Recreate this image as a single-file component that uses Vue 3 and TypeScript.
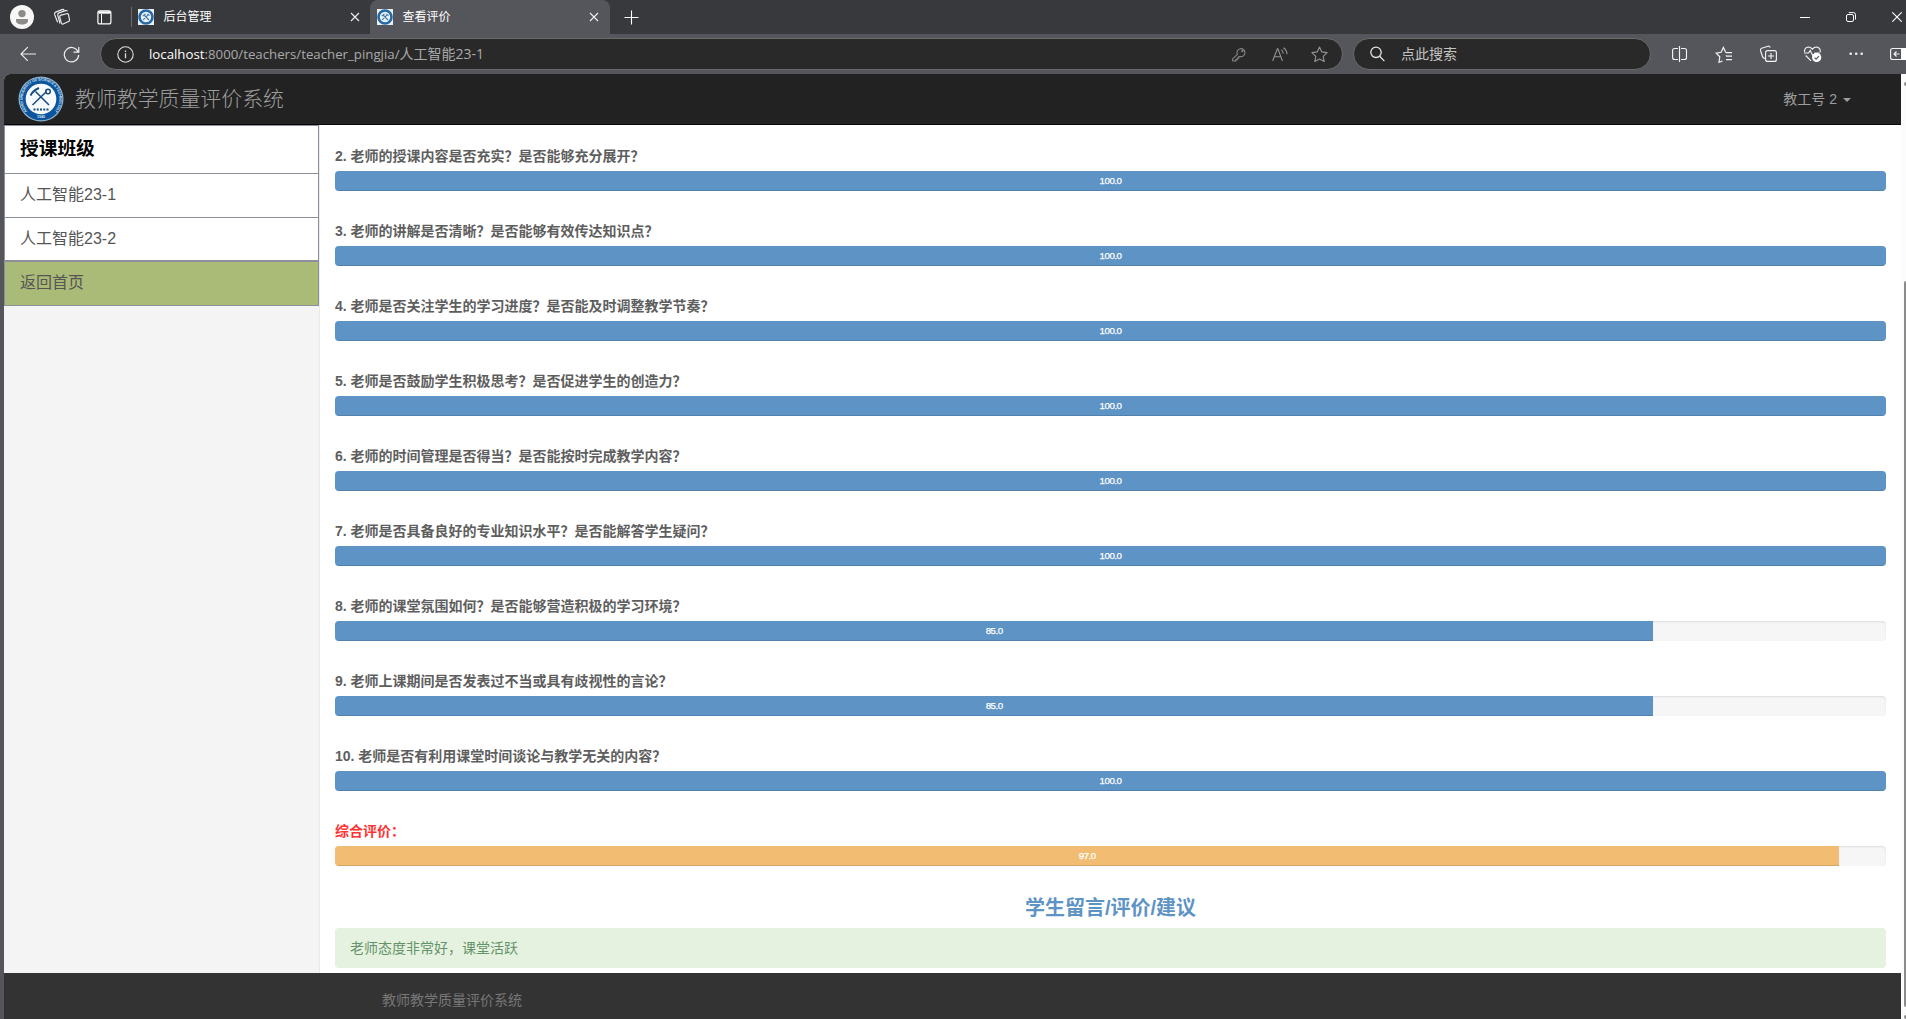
<script setup lang="ts">
interface Rating {
  label: string
  score: number
  total?: boolean
}

const classes: string[] = ['人工智能23-1', '人工智能23-2']

const ratings: Rating[] = [
  { label: '2. 老师的授课内容是否充实？是否能够充分展开？', score: 100 },
  { label: '3. 老师的讲解是否清晰？是否能够有效传达知识点？', score: 100 },
  { label: '4. 老师是否关注学生的学习进度？是否能及时调整教学节奏？', score: 100 },
  { label: '5. 老师是否鼓励学生积极思考？是否促进学生的创造力？', score: 100 },
  { label: '6. 老师的时间管理是否得当？是否能按时完成教学内容？', score: 100 },
  { label: '7. 老师是否具备良好的专业知识水平？是否能解答学生疑问？', score: 100 },
  { label: '8. 老师的课堂氛围如何？是否能够营造积极的学习环境？', score: 85 },
  { label: '9. 老师上课期间是否发表过不当或具有歧视性的言论？', score: 85 },
  { label: '10. 老师是否有利用课堂时间谈论与教学无关的内容？', score: 100 },
  { label: '综合评价：', score: 97, total: true },
]

const tabs = [
  { title: '后台管理', active: false },
  { title: '查看评价', active: true },
]
</script>

<template>
  <div class="window">
    <div class="tabstrip">
      <svg class="avatar" width="24" height="24" viewBox="0 0 24 24">
        <circle cx="12" cy="12" r="12" fill="#f7f7f7" />
        <circle cx="12" cy="8.6" r="3.7" fill="#8d8a88" />
        <path d="M6 14h12v1.4c0 2.600-2.600 4.100-6 4.100s-6-1.500-6-4.100z" fill="#8d8a88" />
      </svg>
      <svg class="workspaces" width="18" height="18" viewBox="0 0 18 18" fill="none" stroke="#eee" stroke-width="1.150">
        <path d="M8.300 5.300 14 3.900q1.400-.3 1.800 1l1 5.100q.3 1.200-.9 1.700l-5.500 2.500q-1.300.5-1.700-.8L7 7.200q-.3-1.500 1.300-1.900z" transform="translate(-.3 1.800)" />
        <path d="M7 15.500 4.800 7.400q-.5-1.800 1.200-2.500L12.500 2.600q1.400-.4 1.900.7M4.600 14.200 1.700 6.700q-.6-1.800 1-2.600L9 1.600q1.400-.5 2.200.5" />
      </svg>
      <svg class="tabmenu" width="15" height="15" viewBox="0 0 15 15" fill="none" stroke="#fff" stroke-width="1.200">
        <rect x=".9" y=".9" width="13" height="13" rx="2" />
        <path d="M1.500 2.500h12" stroke-width="2.400" />
        <path d="M4.500 4v10" stroke-width="1" />
      </svg>
      <span class="divider"></span>
      <div v-for="tab in tabs" :key="tab.title" class="tab" :class="{ active: tab.active }">
        <svg class="favicon" width="16" height="16" viewBox="0 0 16 16">
          <rect width="16" height="16" fill="#e9f1f7" />
          <circle cx="8" cy="8" r="6.500" fill="#e9f1f7" stroke="#2468a5" stroke-width="2.600" />
          <path d="M5.200 10.800 10.500 5.400M6 6l5 5M4.700 7.200 7.500 4.800M9.500 5l2 1.700" stroke="#3d78ad" stroke-width="1.100" fill="none" />
        </svg>
        <span class="tab-title">{{ tab.title }}</span>
        <svg class="close" width="10" height="10" viewBox="0 0 10 10" stroke="#f0f0f0" stroke-width="1.100">
          <path d="M1 1l8 8M9 1 1 9" />
        </svg>
      </div>
      <svg class="newtab" width="15" height="15" viewBox="0 0 15 15" stroke="#fff" stroke-width="1.100">
        <path d="M7.500.5v14M.5 7.500h14" />
      </svg>
      <div class="win-controls">
        <svg width="10" height="10" viewBox="0 0 10 10" stroke="#fff"><path d="M0 5.500h10" /></svg>
        <svg width="10" height="10" viewBox="0 0 10 10" fill="none" stroke="#fff">
          <rect x=".5" y="2.500" width="7" height="7" rx="1.500" />
          <path d="M2.800.6h4.700q2 0 2 2v4.900" />
        </svg>
        <svg width="10" height="10" viewBox="0 0 10 10" stroke="#fff" stroke-width="1.100"><path d="M.3.300l9.400 9.400M9.700.3.300 9.700" /></svg>
      </div>
    </div>

    <div class="toolbar">
      <svg class="back" width="17" height="16" viewBox="0 0 17 16" fill="none" stroke="#eee" stroke-width="1.150">
        <path d="M16 8H1.200M7.800 1.200 1 8l6.800 6.800" />
      </svg>
      <svg class="reload" width="17" height="17" viewBox="0 0 17 17" fill="none" stroke="#eee" stroke-width="1.200">
        <path d="M15.300 6.300A7.200 7.200 0 1 0 15.700 9M15.800 1v5.200h-5.300" />
      </svg>
      <div class="address">
        <svg class="info" width="17" height="17" viewBox="0 0 17 17" fill="none" stroke="#ddd" stroke-width="1.100">
          <circle cx="8.500" cy="8.500" r="7.700" />
          <path d="M8.500 7.300v5M8.500 4.500v1.500" stroke-width="1.300" />
        </svg>
        <span class="url"><b>localhost</b>:8000/teachers/teacher_pingjia/<i>人工智能23-1</i></span>
        <svg class="key" width="14" height="15" viewBox="0 0 14 15" fill="none" stroke="#858585" stroke-width="1.100">
          <path d="M5.400 7.500A4 4 0 1 1 7.900 9.500L6.700 9.700V11.100H5.300V12.600H3.800V14H1.200Q.6 14 .6 13.400V11.900z" />
          <circle cx="10.300" cy="4.200" r=".6" />
        </svg>
        <svg class="read" width="16" height="15" viewBox="0 0 16 15" fill="none" stroke="#929292" stroke-width="1.100">
          <path d="M.6 14 5.400 1.800h.5L10.400 14M2.300 9.700h6.500M9.200 2.600q2 1.500 2 4M11.400.7q3.600 2.300 3.600 6.500" />
        </svg>
        <svg class="star" width="17" height="17" viewBox="0 0 17 17" fill="none" stroke="#929292" stroke-width="1.150" stroke-linejoin="round">
          <path d="M8.500 1l2.300 4.900 5.300.7-3.900 3.700 1 5.300-4.700-2.600-4.700 2.600 1-5.300L.9 6.600l5.300-.7z" />
        </svg>
      </div>
      <div class="search">
        <svg width="15" height="16" viewBox="0 0 15 16" fill="none" stroke="#e6e6e6" stroke-width="1.300">
          <circle cx="6" cy="6.300" r="5.200" />
          <path d="m9.700 10.300 4.700 4.800" />
        </svg>
        <span>点此搜索</span>
      </div>
      <svg class="actions" width="235" height="20" viewBox="0 0 235 20" fill="none" stroke="#f2f2f2" stroke-width="1.150">
        <path d="M7 4.500H3.600q-2 0-2 2v7q0 2 2 2H7M10 4.500h3.500q2 0 2 2v7q0 2-2 2H10M8.500 2v16" />
        <path d="M55 11.800v-.5M51.500 17l-3.500 1.300.8-5.500-3.600-3.700 4.900-.8 2.300-4.800 2.300 4.800 1.200.2M55 8.700h6M55 12.200h6M55 15.700h6" stroke-width="1.200" />
        <path d="M94.200 14.800Q91.800 14 91.300 12L89.500 6.500Q89 4.800 90.600 4.200L97 2.200q1.500-.3 2.300 1.200" />
        <rect x="94.600" y="6.600" width="10.800" height="10.800" rx="2" />
        <path d="M100 9v6M97 12h6" />
        <path d="M140 16.800 134.700 11.500M133.500 8q-.4-4.500 4-5 2.100 0 3.900 2.200Q143 3 145.500 3q4.200.5 3.800 5.300M133 9h4.500l1.700-2.500 3 6 1.700-3.500h5" />
        <circle cx="145.700" cy="13.500" r="4.600" fill="#fff" stroke="none" />
        <path d="m143.600 13.600 1.500 1.500 2.800-3" stroke="#55565b" />
        <g fill="#f2f2f2" stroke="none">
          <circle cx="179.700" cy="9.700" r="1.300" /><circle cx="185.200" cy="9.700" r="1.300" /><circle cx="190.700" cy="9.700" r="1.300" />
        </g>
        <path d="M235 4.500h-13.400q-2 0-2 2v7q0 2 2 2H235M228.500 10h-5.500M225.500 7.500 223 10l2.500 2.500" />
        <path d="M230 4h6v12h-6z" fill="#fff" stroke="none" />
      </svg>
    </div>

    <div class="viewport">
      <div class="page">
        <header class="navbar">
          <svg class="logo" width="46" height="46" viewBox="0 0 46 46">
            <defs>
              <path id="seal-top" d="M9.200 35.200A18.400 18.400 0 1 1 36.800 35.200" />
            </defs>
            <circle cx="23" cy="23" r="22.500" fill="#90b2cf" />
            <circle cx="23" cy="23" r="21.300" fill="#0c559e" />
            <circle cx="23" cy="23" r="15.300" fill="#f7fafc" />
            <text class="seal"><textPath href="#seal-top" textLength="84">ANHUI UNIVERSITY OF SCIENCE &amp; TECHNOLOGY</textPath></text>
            <text class="seal" x="23" y="42.300" text-anchor="middle">1945</text>
            <g fill="none" stroke="#174b7c" stroke-width="1.500">
              <path d="M14.500 29 28.500 15.500M17.500 15.500 31 29" />
              <path d="M12.500 19.500q2.500-5 8.500-7.500" stroke-width="1.900" />
              <circle cx="30" cy="15.500" r="2.300" />
              <path d="M15.500 33.500h15" stroke-width="2" stroke-dasharray="2 1.250" />
            </g>
          </svg>
          <span class="brand">教师教学质量评价系统</span>
          <span class="account">教工号 2<i class="caret"></i></span>
        </header>

        <div class="body">
          <aside class="sidebar">
            <div class="side-title">授课班级</div>
            <div v-for="name in classes" :key="name" class="side-item">{{ name }}</div>
            <div class="side-item home">返回首页</div>
          </aside>
          <main class="content">
            <section v-for="r in ratings" :key="r.label" class="rating" :class="{ total: r.total }">
              <div class="label">{{ r.label }}</div>
              <div class="progress">
                <div class="bar" :style="{ width: r.score + '%' }">{{ r.score.toFixed(1) }}</div>
              </div>
            </section>
            <h4 class="heading">学生留言/评价/建议</h4>
            <div class="message">老师态度非常好，课堂活跃</div>
          </main>
        </div>

        <footer class="footer">教师教学质量评价系统</footer>
      </div>
      <div class="scrollbar">
        <div class="arrow"></div>
        <div class="thumb"></div>
        <div class="arrow bottom"></div>
      </div>
    </div>
  </div>
</template>

<style>
body {
  margin: 0;
  overflow: hidden;
}
</style>

<style scoped>
* {
  box-sizing: border-box;
}
.window {
  width: 1906px;
  height: 1019px;
  overflow: hidden;
  display: flex;
  flex-direction: column;
  background: #55565b;
  font-family: "Liberation Sans", "Noto Sans CJK SC", sans-serif;
}
svg {
  display: block;
  flex: none;
}
i {
  font-style: normal;
}

.tabstrip {
  height: 34px;
  flex: none;
  display: flex;
  align-items: center;
  background: #38393d;
}
.avatar {
  margin-left: 10px;
}
.workspaces {
  margin-left: 19px;
}
.tabmenu {
  margin-left: 26px;
}
.divider {
  width: 1px;
  height: 20px;
  margin-left: 19px;
  background: #6c6d71;
}
.tab {
  width: 238px;
  height: 34px;
  padding: 0 10px 0 6px;
  display: flex;
  align-items: center;
  color: #fff;
  font-size: 12px;
}
.tab.active {
  width: 240px;
  padding: 0 11px 0 7px;
  border-radius: 8px 8px 0 0;
  background: #55565b;
}
.tab-title {
  margin-left: 9.500px;
  flex: 1;
  line-height: 34px;
}
.newtab {
  margin-left: 14px;
}
.win-controls {
  margin-left: auto;
  padding-right: 4px;
  display: flex;
  gap: 36px;
}

.toolbar {
  height: 40px;
  flex: none;
  display: flex;
  align-items: center;
}
.back {
  margin-left: 20px;
}
.reload {
  margin-left: 26px;
}
.address,
.search {
  height: 32px;
  display: flex;
  align-items: center;
  border: 1px solid #6a6b6b;
  border-radius: 16px;
  background: #292929;
}
.address {
  width: 1243px;
  margin-left: 20px;
  padding-left: 16px;
}
.url {
  margin-left: 15px;
  flex: 1;
  color: #a9a9a9;
  font: 13.250px/30px "Open Sans", "Noto Sans CJK SC", sans-serif;
  white-space: nowrap;
}
.url b {
  color: #fff;
  font-weight: 400;
}
.url i {
  font-size: 14px;
}
.read {
  margin-left: 26px;
}
.star {
  margin: 0 14px 0 23px;
}
.search {
  width: 298px;
  margin-left: 10px;
  padding-left: 16px;
  color: #c4c4c4;
  font-size: 14px;
}
.search span {
  margin-left: 16px;
  padding-bottom: 2px;
}
.actions {
  margin-left: 20px;
}

.viewport {
  flex: 1;
  min-height: 0;
  padding-left: 4px;
  display: flex;
}
.page {
  width: 1897px;
  display: flex;
  flex-direction: column;
  border-top-left-radius: 6px;
  overflow: hidden;
  background: #fff;
}
.navbar {
  height: 51px;
  flex: none;
  padding: 0 50px 0 14px;
  display: flex;
  align-items: center;
  background: #222;
  border-bottom: 1px solid #080808;
  color: #9d9d9d;
}
.seal {
  fill: #d5e3ef;
  font: bold 3.700px "Liberation Sans", sans-serif;
}
.brand {
  margin-left: 11px;
  padding-bottom: 4px;
  flex: 1;
  font-size: 20.900px;
  font-weight: 300;
}
.account {
  padding-bottom: 2px;
  display: flex;
  align-items: center;
  font-size: 14px;
}
.caret {
  margin: 3px 0 0 6px;
  border: 4px solid transparent;
  border-top-color: #9d9d9d;
  border-bottom: 0;
}

.body {
  flex: 1;
  min-height: 0;
  display: flex;
}
.sidebar {
  width: 316px;
  flex: none;
  border-right: 1px solid #eaeaea;
  background: #f4f4f4;
}
.side-title,
.side-item {
  padding-left: 15px;
  border: 1px solid #8e8f9c;
  border-top-width: 0;
  background: #fff;
}
.side-title {
  height: 49px;
  border-top-width: 1px;
  color: #000;
  font-size: 18.720px;
  font-weight: 700;
  line-height: 46px;
}
.side-item {
  height: 44px;
  color: #555;
  font-size: 16px;
  line-height: 41px;
}
.side-item + .side-item {
  height: 43px;
}
.side-item.home.home {
  height: 45px;
  border-top-width: 1px;
  background: #aaba77;
}

.content {
  flex: 1;
  padding: 21px 15px 0;
}
.rating {
  margin-bottom: 30px;
}
.label {
  height: 20px;
  margin-bottom: 5px;
  color: #5e5e5e;
  font-size: 14px;
  font-weight: 700;
  line-height: 20px;
}
.total .label {
  color: #ff3333;
}
.progress {
  height: 20px;
  overflow: hidden;
  border-radius: 4px;
  background: #f6f6f6;
  box-shadow: inset 0 1px 2px rgba(0, 0, 0, 0.1);
}
.bar {
  height: 20px;
  background: #5e93c5;
  box-shadow: inset 0 -1px 0 rgba(0, 0, 0, 0.12);
  color: #fff;
  font-size: 9.700px;
  letter-spacing: -0.450px;
  line-height: 20px;
  text-align: center;
  -webkit-text-stroke: 0.250px #fff;
}
.total .bar {
  background: #f2bd72;
}
.heading {
  height: 22px;
  margin: 0 0 10px;
  color: #5e93c5;
  font-size: 20px;
  font-weight: 700;
  line-height: 24px;
  text-align: center;
}
.message {
  height: 40px;
  padding-left: 15px;
  border-radius: 4px;
  background: #e6f2e0;
  color: #64936a;
  font-size: 14px;
  line-height: 40px;
}

.footer {
  height: 46px;
  flex: none;
  padding: 17px 0 0 378px;
  background: #333;
  color: #777;
  font-size: 14px;
  line-height: 20px;
}

.scrollbar {
  flex: 1;
  display: flex;
  flex-direction: column;
  align-items: flex-end;
  background: #fcfcfc;
}
.arrow {
  width: 2px;
  height: 4px;
  margin-top: 8px;
  border-radius: 2px 0 0 2px;
  background: #8b8b8b;
}
.thumb {
  width: 2px;
  height: 728px;
  margin-top: 195px;
  border-radius: 2px 0 0 2px;
  background: #8b8b8b;
}
</style>
